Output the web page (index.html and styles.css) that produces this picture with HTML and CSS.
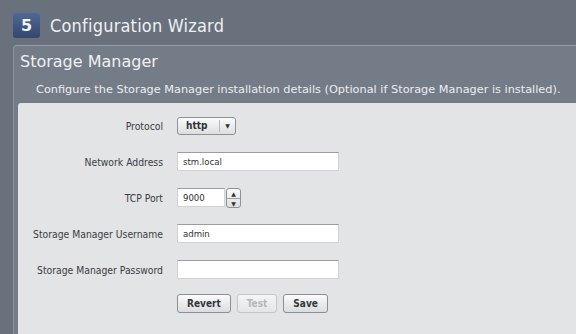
FILE: index.html
```html
<!DOCTYPE html>
<html lang="en">
<head>
    <meta charset="UTF-8">
    <title>Configuration Wizard</title>
    <link rel="stylesheet" href="styles.css">
</head>
<body>

    <div class="wizard-header">
        <span class="step-badge">5</span>
        <h1>Configuration Wizard</h1>
    </div>

    <div class="section">
        <h2>Storage Manager</h2>
        <p class="section-desc">Configure the Storage Manager installation details (Optional if Storage Manager is installed).</p>

        <div class="form-box">
            <div class="form-row">
                <label>Protocol</label>
                <div class="select">
                    <span class="select-value">http</span>
                    <span class="select-arrow">&#9660;</span>
                </div>
            </div>

            <div class="form-row">
                <label>Network Address</label>
                <input type="text" class="text-input" value="stm.local">
            </div>

            <div class="form-row">
                <label>TCP Port</label>
                <input type="text" class="text-input port-input" value="9000">
                <div class="spinner">
                    <span class="spin-up">&#9650;</span>
                    <span class="spin-down">&#9660;</span>
                </div>
            </div>

            <div class="form-row">
                <label>Storage Manager Username</label>
                <input type="text" class="text-input" value="admin">
            </div>

            <div class="form-row">
                <label>Storage Manager Password</label>
                <input type="password" class="text-input" value="">
            </div>

            <div class="form-row buttons-row">
                <label></label>
                <button class="btn">Revert</button>
                <button class="btn" disabled>Test</button>
                <button class="btn">Save</button>
            </div>
        </div>
    </div>

</body>
</html>
```

FILE: styles.css
```css
body {
    margin: 0;
    padding: 0;
    background-color: #69717c;
    font-family: "DejaVu Sans", Verdana, sans-serif;
    height: 334px;
    overflow: hidden;
    display: flex;
    flex-direction: column;
}

.wizard-header {
    display: flex;
    align-items: center;
    padding: 13px 0 0 13px;
    height: 25px;
}

.step-badge {
    width: 27px;
    height: 25px;
    border-radius: 3px;
    background: linear-gradient(#4f6895, #34476d);
    color: #f2f4f8;
    font-size: 16px;
    font-weight: bold;
    text-align: center;
    line-height: 25px;
}

.wizard-header h1 {
    margin: 0 0 0 10px;
    font-family: "DejaVu Sans Condensed", "DejaVu Sans", sans-serif;
    font-size: 18px;
    font-weight: normal;
    color: #eef0f3;
    letter-spacing: 0.2px;
}

.section {
    flex: 1;
    display: flex;
    flex-direction: column;
    margin: 7px 0 0 13px;
    background-color: #747c87;
    border-top: 1px solid #959ca5;
    border-left: 1px solid #8c939c;
    border-top-left-radius: 4px;
    padding-left: 4px;
}

.section h2 {
    margin: 0;
    padding: 6px 0 0 2px;
    font-size: 16px;
    font-weight: normal;
    color: #eef0f3;
    height: 24px;
}

.section-desc {
    margin: 0;
    padding: 7px 0 0 18px;
    height: 20px;
    font-size: 11.3px;
    color: #eceef1;
    white-space: nowrap;
}

.form-box {
    flex: 1;
    background-color: #e3e4e6;
    border-top-left-radius: 3px;
    padding-top: 13px;
    display: flex;
    flex-direction: column;
    gap: 17px;
}

.form-row {
    display: flex;
    align-items: center;
    height: 19px;
}

.form-row label {
    width: 145px;
    margin-right: 14px;
    text-align: right;
    font-family: "DejaVu Sans Condensed", "DejaVu Sans", sans-serif;
    font-size: 10.3px;
    color: #3a3d42;
    flex-shrink: 0;
}

.text-input {
    width: 162px;
    height: 19px;
    box-sizing: border-box;
    border: 1px solid #d0d2d5;
    border-top-color: #9a9ea4;
    background-color: #fff;
    padding: 0 5px;
    font-family: "DejaVu Sans Condensed", "DejaVu Sans", sans-serif;
    font-size: 9.5px;
    color: #2d3034;
    outline: none;
}

.port-input {
    width: 48px;
}

.select {
    display: flex;
    align-items: center;
    width: 59px;
    height: 18px;
    box-sizing: border-box;
    border: 1px solid #8e9297;
    border-radius: 3px;
    background: linear-gradient(#fafbfb, #dcdee0);
}

.select-value {
    width: 42px;
    padding-left: 8px;
    box-sizing: border-box;
    font-family: "DejaVu Sans Condensed", "DejaVu Sans", sans-serif;
    font-size: 10px;
    font-weight: bold;
    color: #2f3236;
    border-right: 1px solid #b5b8bc;
    line-height: 12px;
}

.select-arrow {
    flex: 1;
    text-align: center;
    font-size: 6px;
    color: #333;
}

.spinner {
    display: flex;
    flex-direction: column;
    width: 15px;
    height: 20px;
    margin-left: 1px;
    box-sizing: border-box;
    border: 1px solid #8e9297;
    border-radius: 3px;
    background: linear-gradient(#fafbfb, #dcdee0);
}

.spinner span {
    flex: 1;
    text-align: center;
    font-size: 6px;
    line-height: 9px;
    color: #333;
}

.spin-up {
    border-bottom: 1px solid #9ea2a7;
}

.buttons-row {
    margin-top: -2px;
    gap: 6px;
}

.buttons-row label {
    margin-right: 8px;
}

.btn {
    height: 19px;
    padding: 0 9px;
    border: 1px solid #8b8f95;
    border-radius: 3px;
    background: linear-gradient(#fbfbfc, #dadcdf);
    font-family: "DejaVu Sans Condensed", "DejaVu Sans", sans-serif;
    font-size: 10px;
    font-weight: bold;
    color: #33363a;
    cursor: pointer;
}

.btn:disabled {
    border-color: #c3c6ca;
    color: #b4b7bb;
    background: linear-gradient(#f4f5f6, #e4e5e7);
    cursor: default;
}
```
